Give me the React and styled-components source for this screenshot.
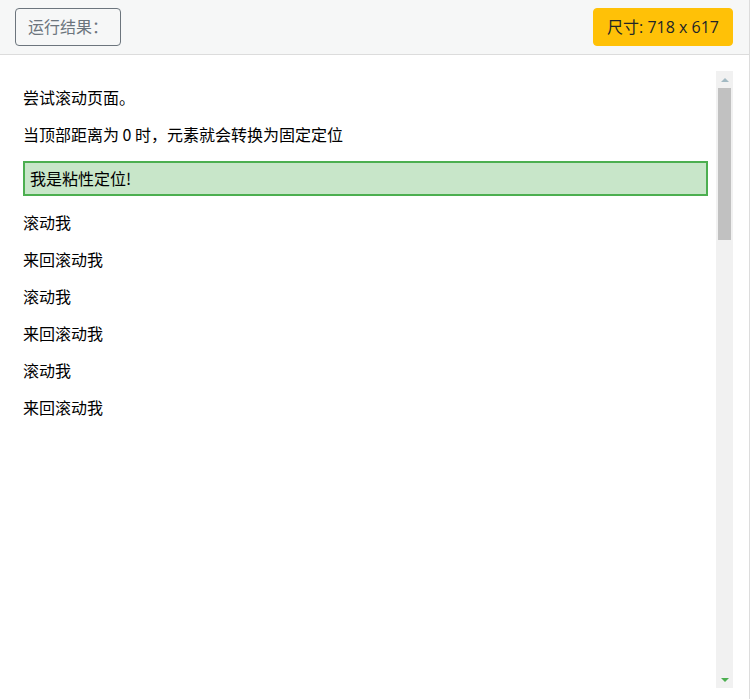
import React from "react";
import styled, { createGlobalStyle } from "styled-components";

const Global = createGlobalStyle`
  html, body { margin: 0; padding: 0; background: #fff; }
  body { font-family: "Open Sans", "Noto Sans CJK SC", sans-serif; }
`;

const Frame = styled.div`
  width: 749px;
  height: 699px;
  border-right: 1px solid #dcdcdc;
  display: flex;
  flex-direction: column;
  background: #fff;
`;

const Header = styled.div`
  height: 54px;
  flex: none;
  background: #f6f7f7;
  border-bottom: 1px solid #dcdcdc;
  display: flex;
  align-items: center;
  justify-content: space-between;
  padding: 0 16px 0 15px;
`;

const Btn = styled.div`
  box-sizing: border-box;
  height: 38px;
  padding: 0 ${(p) => (p.$warn ? "13px" : "12px")};
  display: flex;
  align-items: center;
  font-size: 16px;
  line-height: 24px;
  border-radius: 4px;
  border: 1px solid ${(p) => (p.$warn ? "#ffc107" : "#6c757d")};
  background: ${(p) => (p.$warn ? "#ffc107" : "transparent")};
  color: ${(p) => (p.$warn ? "#212529" : "#6c757d")};
  font-family: "Open Sans", "Noto Sans CJK SC", sans-serif;
`;

const Body = styled.div`
  flex: 1;
  padding: 16px 0 0 15px;
`;

const Preview = styled.div`
  width: 718px;
  height: 617px;
  display: flex;
`;

const Doc = styled.div`
  flex: 1;
  overflow: hidden;
  padding: 0 8px;
  color: #000;
  font-family: "Noto Sans CJK SC", sans-serif;
  font-size: 16px;
`;

const P = styled.p`
  margin: 16px 0;
  line-height: 21px;
`;

const Sticky = styled.div`
  position: sticky;
  top: 0;
  padding: 5px;
  line-height: 21px;
  background: #c8e6c9;
  border: 2px solid #4caf50;
`;

const Track = styled.div`
  width: 17px;
  flex: none;
  background: #f1f1f1;
  display: flex;
  flex-direction: column;
`;

const Arrow = styled.div`
  height: 17px;
  flex: none;
  display: flex;
  align-items: center;
  justify-content: center;
  &::after {
    content: "";
    width: 0;
    height: 0;
    border-left: 4px solid transparent;
    border-right: 4px solid transparent;
    ${(p) =>
      p.$down
        ? "border-top: 4px solid #4caf50;"
        : "border-bottom: 4px solid #a3bac3;"}
  }
`;

const Thumb = styled.div`
  height: 152px;
  margin: 0 2px;
  background: #c1c1c1;
  flex: none;
`;

const Spacer = styled.div`
  flex: 1;
`;

export default function App() {
  const rows = ["滚动我", "来回滚动我", "滚动我", "来回滚动我", "滚动我", "来回滚动我"];
  return (
    <>
      <Global />
      <Frame>
        <Header>
          <Btn>运行结果：</Btn>
          <Btn $warn>尺寸: 718 x 617</Btn>
        </Header>
        <Body>
          <Preview>
            <Doc>
              <P>尝试滚动页面。</P>
              <P>当顶部距离为 0 时，元素就会转换为固定定位</P>
              <Sticky>我是粘性定位!</Sticky>
              {rows.map((r, i) => (
                <P key={i}>{r}</P>
              ))}
            </Doc>
            <Track>
              <Arrow />
              <Thumb />
              <Spacer />
              <Arrow $down />
            </Track>
          </Preview>
        </Body>
      </Frame>
    </>
  );
}
